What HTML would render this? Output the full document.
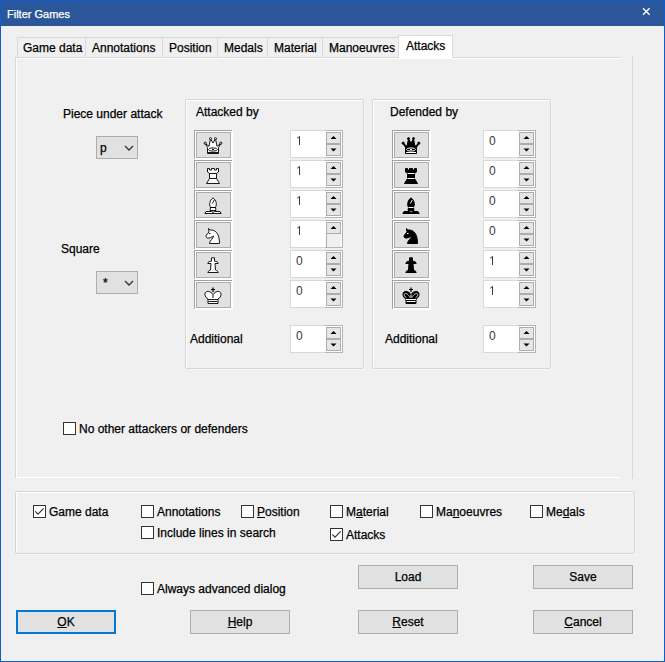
<!DOCTYPE html>
<html><head><meta charset="utf-8"><style>
html,body{margin:0;padding:0;width:665px;height:662px;overflow:hidden;background:#f0f0f0}
.t{position:absolute;font-family:"Liberation Sans", sans-serif;font-size:12px;line-height:normal;white-space:nowrap;color:#000;-webkit-text-stroke:0.25px currentColor}
u{text-decoration:underline;text-underline-offset:1px}
</style></head><body>
<div style="position:absolute;left:0;top:0;width:665px;height:662px;box-sizing:border-box;border:1px solid #0d5ecb;background:#f0f0f0"></div>
<div style="position:absolute;left:0px;top:0px;width:665px;height:26px;background:#2b579a;border-top:1px solid #0d5ecb;border-left:1px solid #0d5ecb;border-right:1px solid #0d5ecb;box-sizing:border-box"></div>
<div class="t" style="left:7px;top:8px;font-size:11px;color:#fff">Filter Games</div>
<svg style="position:absolute;left:640px;top:6px" width="12" height="12" viewBox="0 0 12 12"><path d="M3 2.2L9.6 8.8M9.6 2.2L3 8.8" stroke="#fff" stroke-width="1.3"/></svg>
<div style="position:absolute;left:15px;top:57px;width:606px;height:1px;background:#d9d9d9"></div>
<div style="position:absolute;left:16px;top:58px;width:605px;height:1px;background:#fff"></div>
<div style="position:absolute;left:15px;top:57px;width:1px;height:421px;background:#d9d9d9"></div>
<div style="position:absolute;left:16px;top:58px;width:1px;height:420px;background:#fff"></div>
<div style="position:absolute;left:632px;top:56px;width:1px;height:423px;background:#d9d9d9"></div>
<div style="position:absolute;left:16px;top:477px;width:605px;height:1px;background:#fff"></div>
<div style="position:absolute;left:17px;top:37px;width:69px;height:20px;box-sizing:border-box;border:1px solid #d9d9d9;border-bottom:none;background:#f0f0f0"></div>
<div class="t" style="left:23px;top:41px;font-size:12px;">Game data</div>
<div style="position:absolute;left:85px;top:37px;width:78px;height:20px;box-sizing:border-box;border:1px solid #d9d9d9;border-bottom:none;background:#f0f0f0"></div>
<div class="t" style="left:92px;top:41px;font-size:12px;">Annotations</div>
<div style="position:absolute;left:162px;top:37px;width:56px;height:20px;box-sizing:border-box;border:1px solid #d9d9d9;border-bottom:none;background:#f0f0f0"></div>
<div class="t" style="left:169px;top:41px;font-size:12px;">Position</div>
<div style="position:absolute;left:217px;top:37px;width:51px;height:20px;box-sizing:border-box;border:1px solid #d9d9d9;border-bottom:none;background:#f0f0f0"></div>
<div class="t" style="left:224px;top:41px;font-size:12px;">Medals</div>
<div style="position:absolute;left:267px;top:37px;width:56px;height:20px;box-sizing:border-box;border:1px solid #d9d9d9;border-bottom:none;background:#f0f0f0"></div>
<div class="t" style="left:274px;top:41px;font-size:12px;">Material</div>
<div style="position:absolute;left:322px;top:37px;width:77px;height:20px;box-sizing:border-box;border:1px solid #d9d9d9;border-bottom:none;background:#f0f0f0"></div>
<div class="t" style="left:329px;top:41px;font-size:12px;">Manoeuvres</div>
<div style="position:absolute;left:398px;top:35px;width:55px;height:23px;box-sizing:border-box;border:1px solid #d9d9d9;border-bottom:none;background:#fff"></div>
<div class="t" style="left:406px;top:39px;font-size:12px;">Attacks</div>
<div class="t" style="left:63px;top:107px;font-size:12px;">Piece under attack</div>
<div style="position:absolute;left:96px;top:136px;width:42px;height:23px;box-sizing:border-box;border:1px solid #adadad;background:#e1e1e1"></div>
<div class="t" style="left:100px;top:141px;font-size:12px;">p</div>
<svg style="position:absolute;left:124px;top:145px" width="10" height="7" viewBox="0 0 10 7"><path d="M1 1L5 5L9 1" fill="none" stroke="#333" stroke-width="1.3"/></svg>
<div class="t" style="left:61px;top:242px;font-size:12px;">Square</div>
<div style="position:absolute;left:96px;top:271px;width:42px;height:23px;box-sizing:border-box;border:1px solid #adadad;background:#e1e1e1"></div>
<div class="t" style="left:103px;top:276px;font-size:12px;">*</div>
<svg style="position:absolute;left:124px;top:280px" width="10" height="7" viewBox="0 0 10 7"><path d="M1 1L5 5L9 1" fill="none" stroke="#333" stroke-width="1.3"/></svg>
<div style="position:absolute;left:185px;top:99px;width:179px;height:270px;box-sizing:border-box;border:1px solid #d5d5d5;border-radius:2px;box-shadow:inset 1px 1px 0 #fff,1px 1px 0 #f7f7f7"></div>
<div class="t" style="left:196px;top:105px;font-size:12px;">Attacked by</div>
<div style="position:absolute;left:372px;top:99px;width:179px;height:270px;box-sizing:border-box;border:1px solid #d5d5d5;border-radius:2px;box-shadow:inset 1px 1px 0 #fff,1px 1px 0 #f7f7f7"></div>
<div class="t" style="left:390px;top:105px;font-size:12px;">Defended by</div>
<div style="position:absolute;left:194px;top:130px;width:39px;height:30px;background:#fff"></div>
<div style="position:absolute;left:194px;top:130px;width:38px;height:1px;background:#a0a0a0"></div>
<div style="position:absolute;left:194px;top:130px;width:1px;height:29px;background:#a0a0a0"></div>
<div style="position:absolute;left:196px;top:132px;width:35px;height:26px;box-sizing:border-box;border:1px solid #adadad;background:#e1e1e1"></div>
<svg style="position:absolute;left:204px;top:137px" width="18" height="18" viewBox="0 0 18 18" overflow="visible"><g fill="#fff" stroke="#000" stroke-width="0.9" stroke-linejoin="round"><path d="M3.5 16.5V10.5L1.2 6.5L5 9.3L6.5 1.8L9 6L11.5 1.8L13 9.3L16.8 6.5L14.5 10.5V16.5Z"/><circle cx="1.2" cy="6.2" r="1.1"/><circle cx="16.8" cy="6.2" r="1.1"/><circle cx="6.5" cy="1.6" r="1"/><circle cx="11.5" cy="1.6" r="1"/></g><ellipse cx="9" cy="12.5" rx="4.6" ry="1.6" fill="none" stroke="#000" stroke-width="0.9"/><path d="M8 12.5H10M4 15.5H14" stroke="#000" stroke-width="0.9"/></svg>
<div style="position:absolute;left:392px;top:130px;width:39px;height:30px;background:#fff"></div>
<div style="position:absolute;left:392px;top:130px;width:38px;height:1px;background:#a0a0a0"></div>
<div style="position:absolute;left:392px;top:130px;width:1px;height:29px;background:#a0a0a0"></div>
<div style="position:absolute;left:394px;top:132px;width:35px;height:26px;box-sizing:border-box;border:1px solid #adadad;background:#e1e1e1"></div>
<svg style="position:absolute;left:402px;top:137px" width="18" height="18" viewBox="0 0 18 18" overflow="visible"><g fill="#000" stroke="#000" stroke-width="1" stroke-linejoin="round"><path d="M3.5 16.5V10.5L1.2 6.5L5 9.3L6.5 1.8L9 6L11.5 1.8L13 9.3L16.8 6.5L14.5 10.5V16.5Z"/><circle cx="1.2" cy="6.2" r="1.1"/><circle cx="16.8" cy="6.2" r="1.1"/><circle cx="6.5" cy="1.6" r="1"/><circle cx="11.5" cy="1.6" r="1"/></g><ellipse cx="9" cy="12.5" rx="4.6" ry="1.6" fill="none" stroke="#fff" stroke-width="1"/><path d="M8 12.5H10M4 15.5H14" stroke="#fff" stroke-width="1"/></svg>
<div style="position:absolute;left:290px;top:130px;width:53px;height:28px;box-sizing:border-box;border:1px solid #d9d9d9;background:#fff"></div>
<div style="position:absolute;left:325px;top:130px;width:18px;height:28px;box-sizing:border-box;border:1px solid #b4b4b4;border-left:none"></div>
<svg style="position:absolute;left:297px;top:136px" width="4" height="9" viewBox="0 0 4 9"><path d="M2.5 0.3V9M0.2 2.2L2.5 0.5" fill="none" stroke="#3a3a3a" stroke-width="1"/></svg>
<div style="position:absolute;left:326px;top:132px;width:15px;height:12px;box-sizing:border-box;border:1px solid #adadad;background:#e6e6e6"></div>
<svg style="position:absolute;left:330px;top:135px" width="7" height="5" viewBox="0 0 7 5"><path d="M0.5 4L3.5 1L6.5 4Z" fill="#000"/></svg>
<div style="position:absolute;left:326px;top:144px;width:15px;height:12px;box-sizing:border-box;border:1px solid #adadad;background:#e6e6e6"></div>
<svg style="position:absolute;left:330px;top:148px" width="7" height="5" viewBox="0 0 7 5"><path d="M0.5 0.5L3.5 3.5L6.5 0.5Z" fill="#000"/></svg>
<div style="position:absolute;left:483px;top:130px;width:53px;height:28px;box-sizing:border-box;border:1px solid #d9d9d9;background:#fff"></div>
<div style="position:absolute;left:518px;top:130px;width:18px;height:28px;box-sizing:border-box;border:1px solid #b4b4b4;border-left:none"></div>
<div class="t" style="left:489px;top:134px;font-size:12px;-webkit-text-stroke:0;color:#3a3a3a">0</div>
<div style="position:absolute;left:519px;top:132px;width:15px;height:12px;box-sizing:border-box;border:1px solid #adadad;background:#e6e6e6"></div>
<svg style="position:absolute;left:523px;top:135px" width="7" height="5" viewBox="0 0 7 5"><path d="M0.5 4L3.5 1L6.5 4Z" fill="#000"/></svg>
<div style="position:absolute;left:519px;top:144px;width:15px;height:12px;box-sizing:border-box;border:1px solid #adadad;background:#e6e6e6"></div>
<svg style="position:absolute;left:523px;top:148px" width="7" height="5" viewBox="0 0 7 5"><path d="M0.5 0.5L3.5 3.5L6.5 0.5Z" fill="#000"/></svg>
<div style="position:absolute;left:194px;top:160px;width:39px;height:30px;background:#fff"></div>
<div style="position:absolute;left:194px;top:160px;width:38px;height:1px;background:#a0a0a0"></div>
<div style="position:absolute;left:194px;top:160px;width:1px;height:29px;background:#a0a0a0"></div>
<div style="position:absolute;left:196px;top:162px;width:35px;height:26px;box-sizing:border-box;border:1px solid #adadad;background:#e1e1e1"></div>
<svg style="position:absolute;left:204px;top:167px" width="18" height="18" viewBox="0 0 18 18" overflow="visible"><path d="M3.5 1.5H5.5V3H7.5V1.5H10.5V3H12.5V1.5H14.5V5L12.5 6.5V11.5L15.5 16.5H2.5L5.5 11.5V6.5L3.5 5Z" fill="#fff" stroke="#000" stroke-width="0.9" stroke-linejoin="round"/><path d="M5.5 6.5H12.5M5.5 11.5H12.5" stroke="#000" stroke-width="0.9"/></svg>
<div style="position:absolute;left:392px;top:160px;width:39px;height:30px;background:#fff"></div>
<div style="position:absolute;left:392px;top:160px;width:38px;height:1px;background:#a0a0a0"></div>
<div style="position:absolute;left:392px;top:160px;width:1px;height:29px;background:#a0a0a0"></div>
<div style="position:absolute;left:394px;top:162px;width:35px;height:26px;box-sizing:border-box;border:1px solid #adadad;background:#e1e1e1"></div>
<svg style="position:absolute;left:402px;top:167px" width="18" height="18" viewBox="0 0 18 18" overflow="visible"><path d="M3.5 1.5H5.5V3H7.5V1.5H10.5V3H12.5V1.5H14.5V5L12.5 6.5V11.5L15.5 16.5H2.5L5.5 11.5V6.5L3.5 5Z" fill="#000" stroke="#000" stroke-width="1" stroke-linejoin="round"/><path d="M5.5 6.5H12.5M5.5 11.5H12.5" stroke="#fff" stroke-width="1"/></svg>
<div style="position:absolute;left:290px;top:160px;width:53px;height:28px;box-sizing:border-box;border:1px solid #d9d9d9;background:#fff"></div>
<div style="position:absolute;left:325px;top:160px;width:18px;height:28px;box-sizing:border-box;border:1px solid #b4b4b4;border-left:none"></div>
<svg style="position:absolute;left:297px;top:166px" width="4" height="9" viewBox="0 0 4 9"><path d="M2.5 0.3V9M0.2 2.2L2.5 0.5" fill="none" stroke="#3a3a3a" stroke-width="1"/></svg>
<div style="position:absolute;left:326px;top:162px;width:15px;height:12px;box-sizing:border-box;border:1px solid #adadad;background:#e6e6e6"></div>
<svg style="position:absolute;left:330px;top:165px" width="7" height="5" viewBox="0 0 7 5"><path d="M0.5 4L3.5 1L6.5 4Z" fill="#000"/></svg>
<div style="position:absolute;left:326px;top:174px;width:15px;height:12px;box-sizing:border-box;border:1px solid #adadad;background:#e6e6e6"></div>
<svg style="position:absolute;left:330px;top:178px" width="7" height="5" viewBox="0 0 7 5"><path d="M0.5 0.5L3.5 3.5L6.5 0.5Z" fill="#000"/></svg>
<div style="position:absolute;left:483px;top:160px;width:53px;height:28px;box-sizing:border-box;border:1px solid #d9d9d9;background:#fff"></div>
<div style="position:absolute;left:518px;top:160px;width:18px;height:28px;box-sizing:border-box;border:1px solid #b4b4b4;border-left:none"></div>
<div class="t" style="left:489px;top:164px;font-size:12px;-webkit-text-stroke:0;color:#3a3a3a">0</div>
<div style="position:absolute;left:519px;top:162px;width:15px;height:12px;box-sizing:border-box;border:1px solid #adadad;background:#e6e6e6"></div>
<svg style="position:absolute;left:523px;top:165px" width="7" height="5" viewBox="0 0 7 5"><path d="M0.5 4L3.5 1L6.5 4Z" fill="#000"/></svg>
<div style="position:absolute;left:519px;top:174px;width:15px;height:12px;box-sizing:border-box;border:1px solid #adadad;background:#e6e6e6"></div>
<svg style="position:absolute;left:523px;top:178px" width="7" height="5" viewBox="0 0 7 5"><path d="M0.5 0.5L3.5 3.5L6.5 0.5Z" fill="#000"/></svg>
<div style="position:absolute;left:194px;top:190px;width:39px;height:30px;background:#fff"></div>
<div style="position:absolute;left:194px;top:190px;width:38px;height:1px;background:#a0a0a0"></div>
<div style="position:absolute;left:194px;top:190px;width:1px;height:29px;background:#a0a0a0"></div>
<div style="position:absolute;left:196px;top:192px;width:35px;height:26px;box-sizing:border-box;border:1px solid #adadad;background:#e1e1e1"></div>
<svg style="position:absolute;left:204px;top:197px" width="18" height="18" viewBox="0 0 18 18" overflow="visible"><g fill="#fff" stroke="#000" stroke-width="0.9" stroke-linejoin="round"><path d="M9 0.8C5.5 3.5 5 7.5 6.5 10.5H11.5C13 7.5 12.5 3.5 9 0.8Z"/><path d="M6.5 10.5L6 13.5H12L11.5 10.5Z"/><path d="M0.8 16.5L2 14.5H7.5L9 15.5L10.5 14.5H16L17.2 16.5Z"/></g><path d="M10.3 3L8.3 6.5M6.5 10.5H11.5" stroke="#000" stroke-width="0.9" fill="none"/></svg>
<div style="position:absolute;left:392px;top:190px;width:39px;height:30px;background:#fff"></div>
<div style="position:absolute;left:392px;top:190px;width:38px;height:1px;background:#a0a0a0"></div>
<div style="position:absolute;left:392px;top:190px;width:1px;height:29px;background:#a0a0a0"></div>
<div style="position:absolute;left:394px;top:192px;width:35px;height:26px;box-sizing:border-box;border:1px solid #adadad;background:#e1e1e1"></div>
<svg style="position:absolute;left:402px;top:197px" width="18" height="18" viewBox="0 0 18 18" overflow="visible"><g fill="#000" stroke="#000" stroke-width="1" stroke-linejoin="round"><path d="M9 0.8C5.5 3.5 5 7.5 6.5 10.5H11.5C13 7.5 12.5 3.5 9 0.8Z"/><path d="M6.5 10.5L6 13.5H12L11.5 10.5Z"/><path d="M0.8 16.5L2 14.5H7.5L9 15.5L10.5 14.5H16L17.2 16.5Z"/></g><path d="M10.3 3L8.3 6.5M6.5 10.5H11.5" stroke="#fff" stroke-width="1" fill="none"/></svg>
<div style="position:absolute;left:290px;top:190px;width:53px;height:28px;box-sizing:border-box;border:1px solid #d9d9d9;background:#fff"></div>
<div style="position:absolute;left:325px;top:190px;width:18px;height:28px;box-sizing:border-box;border:1px solid #b4b4b4;border-left:none"></div>
<svg style="position:absolute;left:297px;top:196px" width="4" height="9" viewBox="0 0 4 9"><path d="M2.5 0.3V9M0.2 2.2L2.5 0.5" fill="none" stroke="#3a3a3a" stroke-width="1"/></svg>
<div style="position:absolute;left:326px;top:192px;width:15px;height:12px;box-sizing:border-box;border:1px solid #adadad;background:#e6e6e6"></div>
<svg style="position:absolute;left:330px;top:195px" width="7" height="5" viewBox="0 0 7 5"><path d="M0.5 4L3.5 1L6.5 4Z" fill="#000"/></svg>
<div style="position:absolute;left:326px;top:204px;width:15px;height:12px;box-sizing:border-box;border:1px solid #adadad;background:#e6e6e6"></div>
<svg style="position:absolute;left:330px;top:208px" width="7" height="5" viewBox="0 0 7 5"><path d="M0.5 0.5L3.5 3.5L6.5 0.5Z" fill="#000"/></svg>
<div style="position:absolute;left:483px;top:190px;width:53px;height:28px;box-sizing:border-box;border:1px solid #d9d9d9;background:#fff"></div>
<div style="position:absolute;left:518px;top:190px;width:18px;height:28px;box-sizing:border-box;border:1px solid #b4b4b4;border-left:none"></div>
<div class="t" style="left:489px;top:194px;font-size:12px;-webkit-text-stroke:0;color:#3a3a3a">0</div>
<div style="position:absolute;left:519px;top:192px;width:15px;height:12px;box-sizing:border-box;border:1px solid #adadad;background:#e6e6e6"></div>
<svg style="position:absolute;left:523px;top:195px" width="7" height="5" viewBox="0 0 7 5"><path d="M0.5 4L3.5 1L6.5 4Z" fill="#000"/></svg>
<div style="position:absolute;left:519px;top:204px;width:15px;height:12px;box-sizing:border-box;border:1px solid #adadad;background:#e6e6e6"></div>
<svg style="position:absolute;left:523px;top:208px" width="7" height="5" viewBox="0 0 7 5"><path d="M0.5 0.5L3.5 3.5L6.5 0.5Z" fill="#000"/></svg>
<div style="position:absolute;left:194px;top:220px;width:39px;height:30px;background:#fff"></div>
<div style="position:absolute;left:194px;top:220px;width:38px;height:1px;background:#a0a0a0"></div>
<div style="position:absolute;left:194px;top:220px;width:1px;height:29px;background:#a0a0a0"></div>
<div style="position:absolute;left:196px;top:222px;width:35px;height:26px;box-sizing:border-box;border:1px solid #adadad;background:#e1e1e1"></div>
<svg style="position:absolute;left:204px;top:227px" width="18" height="18" viewBox="0 0 18 18" overflow="visible"><path d="M4.5 1.5L6 3C11 2.5 15.5 6 15.5 16.5H5.5C5.5 13.5 9.5 11.5 9.5 9C8 10 5.5 11.5 3.5 11C2 10.5 1.5 9.5 2.5 8L5 5Z" fill="#fff" stroke="#000" stroke-width="0.9" stroke-linejoin="round"/><path d="M5 6.5H6.5" stroke="#000" stroke-width="0.9"/></svg>
<div style="position:absolute;left:392px;top:220px;width:39px;height:30px;background:#fff"></div>
<div style="position:absolute;left:392px;top:220px;width:38px;height:1px;background:#a0a0a0"></div>
<div style="position:absolute;left:392px;top:220px;width:1px;height:29px;background:#a0a0a0"></div>
<div style="position:absolute;left:394px;top:222px;width:35px;height:26px;box-sizing:border-box;border:1px solid #adadad;background:#e1e1e1"></div>
<svg style="position:absolute;left:402px;top:227px" width="18" height="18" viewBox="0 0 18 18" overflow="visible"><path d="M4.5 1.5L6 3C11 2.5 15.5 6 15.5 16.5H5.5C5.5 13.5 9.5 11.5 9.5 9C8 10 5.5 11.5 3.5 11C2 10.5 1.5 9.5 2.5 8L5 5Z" fill="#000" stroke="#000" stroke-width="1" stroke-linejoin="round"/><path d="M5 6.5H6.5" stroke="#fff" stroke-width="1"/></svg>
<div style="position:absolute;left:290px;top:220px;width:53px;height:28px;box-sizing:border-box;border:1px solid #d9d9d9;background:#fff"></div>
<div style="position:absolute;left:325px;top:220px;width:18px;height:28px;box-sizing:border-box;border:1px solid #b4b4b4;border-left:none"></div>
<svg style="position:absolute;left:297px;top:226px" width="4" height="9" viewBox="0 0 4 9"><path d="M2.5 0.3V9M0.2 2.2L2.5 0.5" fill="none" stroke="#3a3a3a" stroke-width="1"/></svg>
<div style="position:absolute;left:326px;top:222px;width:15px;height:12px;box-sizing:border-box;border:1px solid #adadad;background:#e6e6e6"></div>
<svg style="position:absolute;left:330px;top:225px" width="7" height="5" viewBox="0 0 7 5"><path d="M0.5 4L3.5 1L6.5 4Z" fill="#000"/></svg>
<div style="position:absolute;left:326px;top:234px;width:15px;height:13px;box-sizing:border-box;border-left:1px solid #adadad;background:#f0f0f0"></div>
<div style="position:absolute;left:483px;top:220px;width:53px;height:28px;box-sizing:border-box;border:1px solid #d9d9d9;background:#fff"></div>
<div style="position:absolute;left:518px;top:220px;width:18px;height:28px;box-sizing:border-box;border:1px solid #b4b4b4;border-left:none"></div>
<div class="t" style="left:489px;top:224px;font-size:12px;-webkit-text-stroke:0;color:#3a3a3a">0</div>
<div style="position:absolute;left:519px;top:222px;width:15px;height:12px;box-sizing:border-box;border:1px solid #adadad;background:#e6e6e6"></div>
<svg style="position:absolute;left:523px;top:225px" width="7" height="5" viewBox="0 0 7 5"><path d="M0.5 4L3.5 1L6.5 4Z" fill="#000"/></svg>
<div style="position:absolute;left:519px;top:234px;width:15px;height:12px;box-sizing:border-box;border:1px solid #adadad;background:#e6e6e6"></div>
<svg style="position:absolute;left:523px;top:238px" width="7" height="5" viewBox="0 0 7 5"><path d="M0.5 0.5L3.5 3.5L6.5 0.5Z" fill="#000"/></svg>
<div style="position:absolute;left:194px;top:250px;width:39px;height:30px;background:#fff"></div>
<div style="position:absolute;left:194px;top:250px;width:38px;height:1px;background:#a0a0a0"></div>
<div style="position:absolute;left:194px;top:250px;width:1px;height:29px;background:#a0a0a0"></div>
<div style="position:absolute;left:196px;top:252px;width:35px;height:26px;box-sizing:border-box;border:1px solid #adadad;background:#e1e1e1"></div>
<svg style="position:absolute;left:204px;top:257px" width="18" height="18" viewBox="0 0 18 18" overflow="visible"><path d="M7.5 0.8H10.5V4.2C12.5 4.2 14.2 5 14.2 6.5H11L11.5 13C12.5 13.5 14 14 14.2 15.5H3.8C4 14 5.5 13.5 6.5 13L7 6.5H3.8C3.8 5 5.5 4.2 7.5 4.2Z" fill="#fff" stroke="#000" stroke-width="0.9" stroke-linejoin="round"/></svg>
<div style="position:absolute;left:392px;top:250px;width:39px;height:30px;background:#fff"></div>
<div style="position:absolute;left:392px;top:250px;width:38px;height:1px;background:#a0a0a0"></div>
<div style="position:absolute;left:392px;top:250px;width:1px;height:29px;background:#a0a0a0"></div>
<div style="position:absolute;left:394px;top:252px;width:35px;height:26px;box-sizing:border-box;border:1px solid #adadad;background:#e1e1e1"></div>
<svg style="position:absolute;left:402px;top:257px" width="18" height="18" viewBox="0 0 18 18" overflow="visible"><path d="M7.5 0.8H10.5V4.2C12.5 4.2 14.2 5 14.2 6.5H11L11.5 13C12.5 13.5 14 14 14.2 15.5H3.8C4 14 5.5 13.5 6.5 13L7 6.5H3.8C3.8 5 5.5 4.2 7.5 4.2Z" fill="#000" stroke="#000" stroke-width="1" stroke-linejoin="round"/></svg>
<div style="position:absolute;left:290px;top:250px;width:53px;height:28px;box-sizing:border-box;border:1px solid #d9d9d9;background:#fff"></div>
<div style="position:absolute;left:325px;top:250px;width:18px;height:28px;box-sizing:border-box;border:1px solid #b4b4b4;border-left:none"></div>
<div class="t" style="left:296px;top:254px;font-size:12px;-webkit-text-stroke:0;color:#3a3a3a">0</div>
<div style="position:absolute;left:326px;top:252px;width:15px;height:12px;box-sizing:border-box;border:1px solid #adadad;background:#e6e6e6"></div>
<svg style="position:absolute;left:330px;top:255px" width="7" height="5" viewBox="0 0 7 5"><path d="M0.5 4L3.5 1L6.5 4Z" fill="#000"/></svg>
<div style="position:absolute;left:326px;top:264px;width:15px;height:12px;box-sizing:border-box;border:1px solid #adadad;background:#e6e6e6"></div>
<svg style="position:absolute;left:330px;top:268px" width="7" height="5" viewBox="0 0 7 5"><path d="M0.5 0.5L3.5 3.5L6.5 0.5Z" fill="#000"/></svg>
<div style="position:absolute;left:483px;top:250px;width:53px;height:28px;box-sizing:border-box;border:1px solid #d9d9d9;background:#fff"></div>
<div style="position:absolute;left:518px;top:250px;width:18px;height:28px;box-sizing:border-box;border:1px solid #b4b4b4;border-left:none"></div>
<svg style="position:absolute;left:490px;top:256px" width="4" height="9" viewBox="0 0 4 9"><path d="M2.5 0.3V9M0.2 2.2L2.5 0.5" fill="none" stroke="#3a3a3a" stroke-width="1"/></svg>
<div style="position:absolute;left:519px;top:252px;width:15px;height:12px;box-sizing:border-box;border:1px solid #adadad;background:#e6e6e6"></div>
<svg style="position:absolute;left:523px;top:255px" width="7" height="5" viewBox="0 0 7 5"><path d="M0.5 4L3.5 1L6.5 4Z" fill="#000"/></svg>
<div style="position:absolute;left:519px;top:264px;width:15px;height:12px;box-sizing:border-box;border:1px solid #adadad;background:#e6e6e6"></div>
<svg style="position:absolute;left:523px;top:268px" width="7" height="5" viewBox="0 0 7 5"><path d="M0.5 0.5L3.5 3.5L6.5 0.5Z" fill="#000"/></svg>
<div style="position:absolute;left:194px;top:280px;width:39px;height:30px;background:#fff"></div>
<div style="position:absolute;left:194px;top:280px;width:38px;height:1px;background:#a0a0a0"></div>
<div style="position:absolute;left:194px;top:280px;width:1px;height:29px;background:#a0a0a0"></div>
<div style="position:absolute;left:196px;top:282px;width:35px;height:26px;box-sizing:border-box;border:1px solid #adadad;background:#e1e1e1"></div>
<svg style="position:absolute;left:204px;top:287px" width="18" height="18" viewBox="0 0 18 18" overflow="visible"><path d="M9 0.5V5M7 2.5H11" stroke="#000" stroke-width="1.2"/><path d="M4 16.5V12C1.2 10.5 0.3 7.5 1.3 5.7C2.8 3.5 6.5 4 9 7.5C11.5 4 15.2 3.5 16.7 5.7C17.7 7.5 16.8 10.5 14 12V16.5Z" fill="#fff" stroke="#000" stroke-width="0.9" stroke-linejoin="round"/><path d="M4 12.5H14M4.5 14.5H13.5M9 7.5V11" stroke="#000" stroke-width="0.9" fill="none"/></svg>
<div style="position:absolute;left:392px;top:280px;width:39px;height:30px;background:#fff"></div>
<div style="position:absolute;left:392px;top:280px;width:38px;height:1px;background:#a0a0a0"></div>
<div style="position:absolute;left:392px;top:280px;width:1px;height:29px;background:#a0a0a0"></div>
<div style="position:absolute;left:394px;top:282px;width:35px;height:26px;box-sizing:border-box;border:1px solid #adadad;background:#e1e1e1"></div>
<svg style="position:absolute;left:402px;top:287px" width="18" height="18" viewBox="0 0 18 18" overflow="visible"><path d="M9 0.5V5M7 2.5H11" stroke="#000" stroke-width="1.2"/><path d="M4 16.5V12C1.2 10.5 0.3 7.5 1.3 5.7C2.8 3.5 6.5 4 9 7.5C11.5 4 15.2 3.5 16.7 5.7C17.7 7.5 16.8 10.5 14 12V16.5Z" fill="#000" stroke="#000" stroke-width="1" stroke-linejoin="round"/><path d="M4 12.5H14M4.5 14.5H13.5M9 7.5V11" stroke="#fff" stroke-width="1" fill="none"/><path class="bk" d="M8 10.5C6.5 7.5 4 5.8 2.6 6.8C1.8 7.6 2.2 9.6 4.5 10.8M10 10.5C11.5 7.5 14 5.8 15.4 6.8C16.2 7.6 15.8 9.6 13.5 10.8" stroke="#fff" stroke-width="0.8" fill="none"/></svg>
<div style="position:absolute;left:290px;top:280px;width:53px;height:28px;box-sizing:border-box;border:1px solid #d9d9d9;background:#fff"></div>
<div style="position:absolute;left:325px;top:280px;width:18px;height:28px;box-sizing:border-box;border:1px solid #b4b4b4;border-left:none"></div>
<div class="t" style="left:296px;top:284px;font-size:12px;-webkit-text-stroke:0;color:#3a3a3a">0</div>
<div style="position:absolute;left:326px;top:282px;width:15px;height:12px;box-sizing:border-box;border:1px solid #adadad;background:#e6e6e6"></div>
<svg style="position:absolute;left:330px;top:285px" width="7" height="5" viewBox="0 0 7 5"><path d="M0.5 4L3.5 1L6.5 4Z" fill="#000"/></svg>
<div style="position:absolute;left:326px;top:294px;width:15px;height:12px;box-sizing:border-box;border:1px solid #adadad;background:#e6e6e6"></div>
<svg style="position:absolute;left:330px;top:298px" width="7" height="5" viewBox="0 0 7 5"><path d="M0.5 0.5L3.5 3.5L6.5 0.5Z" fill="#000"/></svg>
<div style="position:absolute;left:483px;top:280px;width:53px;height:28px;box-sizing:border-box;border:1px solid #d9d9d9;background:#fff"></div>
<div style="position:absolute;left:518px;top:280px;width:18px;height:28px;box-sizing:border-box;border:1px solid #b4b4b4;border-left:none"></div>
<svg style="position:absolute;left:490px;top:286px" width="4" height="9" viewBox="0 0 4 9"><path d="M2.5 0.3V9M0.2 2.2L2.5 0.5" fill="none" stroke="#3a3a3a" stroke-width="1"/></svg>
<div style="position:absolute;left:519px;top:282px;width:15px;height:12px;box-sizing:border-box;border:1px solid #adadad;background:#e6e6e6"></div>
<svg style="position:absolute;left:523px;top:285px" width="7" height="5" viewBox="0 0 7 5"><path d="M0.5 4L3.5 1L6.5 4Z" fill="#000"/></svg>
<div style="position:absolute;left:519px;top:294px;width:15px;height:12px;box-sizing:border-box;border:1px solid #adadad;background:#e6e6e6"></div>
<svg style="position:absolute;left:523px;top:298px" width="7" height="5" viewBox="0 0 7 5"><path d="M0.5 0.5L3.5 3.5L6.5 0.5Z" fill="#000"/></svg>
<div class="t" style="left:190px;top:332px;font-size:12px;">Additional</div>
<div class="t" style="left:385px;top:332px;font-size:12px;">Additional</div>
<div style="position:absolute;left:290px;top:325px;width:53px;height:28px;box-sizing:border-box;border:1px solid #d9d9d9;background:#fff"></div>
<div style="position:absolute;left:325px;top:325px;width:18px;height:28px;box-sizing:border-box;border:1px solid #b4b4b4;border-left:none"></div>
<div class="t" style="left:296px;top:329px;font-size:12px;-webkit-text-stroke:0;color:#3a3a3a">0</div>
<div style="position:absolute;left:326px;top:327px;width:15px;height:12px;box-sizing:border-box;border:1px solid #adadad;background:#e6e6e6"></div>
<svg style="position:absolute;left:330px;top:330px" width="7" height="5" viewBox="0 0 7 5"><path d="M0.5 4L3.5 1L6.5 4Z" fill="#000"/></svg>
<div style="position:absolute;left:326px;top:339px;width:15px;height:12px;box-sizing:border-box;border:1px solid #adadad;background:#e6e6e6"></div>
<svg style="position:absolute;left:330px;top:343px" width="7" height="5" viewBox="0 0 7 5"><path d="M0.5 0.5L3.5 3.5L6.5 0.5Z" fill="#000"/></svg>
<div style="position:absolute;left:483px;top:325px;width:53px;height:28px;box-sizing:border-box;border:1px solid #d9d9d9;background:#fff"></div>
<div style="position:absolute;left:518px;top:325px;width:18px;height:28px;box-sizing:border-box;border:1px solid #b4b4b4;border-left:none"></div>
<div class="t" style="left:489px;top:329px;font-size:12px;-webkit-text-stroke:0;color:#3a3a3a">0</div>
<div style="position:absolute;left:519px;top:327px;width:15px;height:12px;box-sizing:border-box;border:1px solid #adadad;background:#e6e6e6"></div>
<svg style="position:absolute;left:523px;top:330px" width="7" height="5" viewBox="0 0 7 5"><path d="M0.5 4L3.5 1L6.5 4Z" fill="#000"/></svg>
<div style="position:absolute;left:519px;top:339px;width:15px;height:12px;box-sizing:border-box;border:1px solid #adadad;background:#e6e6e6"></div>
<svg style="position:absolute;left:523px;top:343px" width="7" height="5" viewBox="0 0 7 5"><path d="M0.5 0.5L3.5 3.5L6.5 0.5Z" fill="#000"/></svg>
<div style="position:absolute;left:63px;top:422px;width:13px;height:13px;box-sizing:border-box;border:1px solid #333;background:#fff"></div>
<div class="t" style="left:79px;top:422px;font-size:12px;">No other attackers or defenders</div>
<div style="position:absolute;left:15px;top:491px;width:620px;height:63px;box-sizing:border-box;border:1px solid #d5d5d5;border-radius:2px;box-shadow:inset 1px 1px 0 #fff,1px 1px 0 #f7f7f7"></div>
<div style="position:absolute;left:33px;top:505px;width:13px;height:13px;box-sizing:border-box;border:1px solid #333;background:#fff"></div>
<svg style="position:absolute;left:33px;top:505px" width="13" height="13" viewBox="0 0 13 13"><path d="M2.3 6.3L5 9.1L10.6 3.4" fill="none" stroke="#333" stroke-width="1.2"/></svg>
<div class="t" style="left:49px;top:505px;font-size:12px;">Game data</div>
<div style="position:absolute;left:141px;top:505px;width:13px;height:13px;box-sizing:border-box;border:1px solid #333;background:#fff"></div>
<div class="t" style="left:157px;top:505px;font-size:12px;">Annotations</div>
<div style="position:absolute;left:241px;top:505px;width:13px;height:13px;box-sizing:border-box;border:1px solid #333;background:#fff"></div>
<div class="t" style="left:257px;top:505px;font-size:12px;"><u>P</u>osition</div>
<div style="position:absolute;left:330px;top:505px;width:13px;height:13px;box-sizing:border-box;border:1px solid #333;background:#fff"></div>
<div class="t" style="left:346px;top:505px;font-size:12px;">M<u>a</u>terial</div>
<div style="position:absolute;left:420px;top:505px;width:13px;height:13px;box-sizing:border-box;border:1px solid #333;background:#fff"></div>
<div class="t" style="left:436px;top:505px;font-size:12px;">Ma<u>n</u>oeuvres</div>
<div style="position:absolute;left:530px;top:505px;width:13px;height:13px;box-sizing:border-box;border:1px solid #333;background:#fff"></div>
<div class="t" style="left:546px;top:505px;font-size:12px;">Me<u>d</u>als</div>
<div style="position:absolute;left:141px;top:526px;width:13px;height:13px;box-sizing:border-box;border:1px solid #333;background:#fff"></div>
<div class="t" style="left:157px;top:526px;font-size:12px;">Include lines in search</div>
<div style="position:absolute;left:330px;top:528px;width:13px;height:13px;box-sizing:border-box;border:1px solid #333;background:#fff"></div>
<svg style="position:absolute;left:330px;top:528px" width="13" height="13" viewBox="0 0 13 13"><path d="M2.3 6.3L5 9.1L10.6 3.4" fill="none" stroke="#333" stroke-width="1.2"/></svg>
<div class="t" style="left:346px;top:528px;font-size:12px;">Attacks</div>
<div style="position:absolute;left:141px;top:582px;width:13px;height:13px;box-sizing:border-box;border:1px solid #333;background:#fff"></div>
<div class="t" style="left:157px;top:582px;font-size:12px;">Always advanced dialog</div>
<div style="position:absolute;left:358px;top:565px;width:100px;height:24px;box-sizing:border-box;border:1px solid #adadad;background:#e1e1e1"></div>
<div class="t" style="left:358px;top:570px;width:100px;text-align:center">Load</div>
<div style="position:absolute;left:533px;top:565px;width:100px;height:24px;box-sizing:border-box;border:1px solid #adadad;background:#e1e1e1"></div>
<div class="t" style="left:533px;top:570px;width:100px;text-align:center">Save</div>
<div style="position:absolute;left:16px;top:610px;width:100px;height:24px;box-sizing:border-box;border:2px solid #0078d7;background:#e1e1e1"></div>
<div class="t" style="left:16px;top:615px;width:100px;text-align:center"><u>O</u>K</div>
<div style="position:absolute;left:190px;top:610px;width:100px;height:24px;box-sizing:border-box;border:1px solid #adadad;background:#e1e1e1"></div>
<div class="t" style="left:190px;top:615px;width:100px;text-align:center"><u>H</u>elp</div>
<div style="position:absolute;left:358px;top:610px;width:100px;height:24px;box-sizing:border-box;border:1px solid #adadad;background:#e1e1e1"></div>
<div class="t" style="left:358px;top:615px;width:100px;text-align:center"><u>R</u>eset</div>
<div style="position:absolute;left:533px;top:610px;width:100px;height:24px;box-sizing:border-box;border:1px solid #adadad;background:#e1e1e1"></div>
<div class="t" style="left:533px;top:615px;width:100px;text-align:center"><u>C</u>ancel</div>
</body></html>
